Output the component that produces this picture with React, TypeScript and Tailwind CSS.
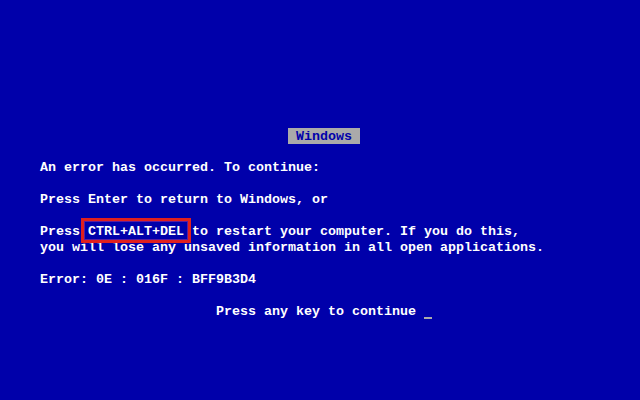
export default function App() {
  return (
    <div className="w-[640px] h-[400px] bg-[#0000aa] text-white font-bold text-[13.333px] leading-4 font-['Liberation_Mono',monospace] whitespace-pre flex flex-col pt-32">
      <div className="h-4 pl-[288px] flex">
        <span className="h-4 bg-[#aaaaaa] text-[#0000aa] pt-px leading-[15px]"> Windows </span>
      </div>
      <div className="h-4" />
      <div className="h-4 pl-10">An error has occurred. To continue:</div>
      <div className="h-4" />
      <div className="h-4 pl-10">Press Enter to return to Windows, or</div>
      <div className="h-4" />
      <div className="h-4 pl-10 flex">
        <span>Press </span>
        <span className="relative h-4">
          CTRL+ALT+DEL
          <span className="absolute -left-[7px] -right-[7px] -top-[6px] -bottom-[3px] border-[3px] border-[#e0201e]">
            <span className="absolute inset-0 border border-[#5a1ea0]" />
          </span>
        </span>
        <span> to restart your computer. If you do this,</span>
      </div>
      <div className="h-4 pl-10">you will lose any unsaved information in all open applications.</div>
      <div className="h-4" />
      <div className="h-4 pl-10">Error: 0E : 016F : BFF9B3D4</div>
      <div className="h-4" />
      <div className="h-4 pl-[216px] flex">
        <span>Press any key to continue </span>
        <span className="w-2 h-4 flex flex-col justify-end pb-[1px]">
          <span className="block h-[2px] w-2 bg-[#aaaaaa]" />
        </span>
      </div>
    </div>
  );
}
